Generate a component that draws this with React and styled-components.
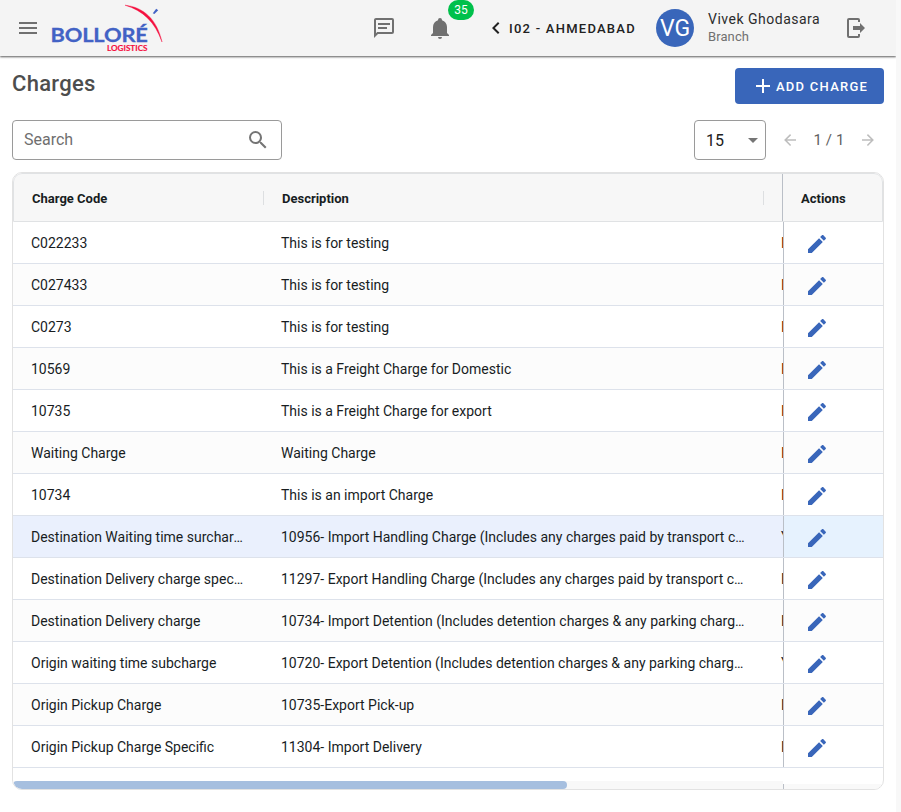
import React from "react";
import styled, { createGlobalStyle } from "styled-components";

const GlobalStyle = createGlobalStyle`
  * { box-sizing: border-box; }
  body {
    margin: 0;
    background: #f8f8f8;
    font-family: Roboto, "Liberation Sans", sans-serif;
    color: #212121;
  }
`;

const paths = {
  menu: "M3,6H21V8H3V6M3,11H21V13H3V11M3,16H21V18H3V16Z",
  message:
    "M20 2A2 2 0 0 1 22 4V16A2 2 0 0 1 20 18H6L2 22V4C2 2.9 2.9 2 4 2H20M4 4V17.17L5.17 16H20V4H4M6 7H18V9H6V7M6 11H15V13H6V11Z",
  bell: "M21,19V20H3V19L5,17V11C5,7.9 7.03,5.17 10,4.29C10,4.19 10,4.1 10,4A2,2 0 0,1 12,2A2,2 0 0,1 14,4C14,4.1 14,4.19 14,4.29C16.97,5.17 19,7.9 19,11V17L21,19M14,21A2,2 0 0,1 12,23A2,2 0 0,1 10,21",
  chevron: "M15.41,16.58L10.83,12L15.41,7.41L14,6L8,12L14,18L15.41,16.58Z",
  logout:
    "M16,17V14H9V10H16V7L21,12L16,17M14,2A2,2 0 0,1 16,4V6H14V4H5V20H14V18H16V20A2,2 0 0,1 14,22H5A2,2 0 0,1 3,20V4A2,2 0 0,1 5,2H14Z",
  plus: "M19,13H13V19H11V13H5V11H11V5H13V11H19V13Z",
  search:
    "M9.5,3A6.5,6.5 0 0,1 16,9.5C16,11.11 15.41,12.59 14.44,13.73L14.71,14H15.5L20.5,19L19,20.5L14,15.5V14.71L13.73,14.44C12.59,15.41 11.11,16 9.5,16A6.5,6.5 0 0,1 3,9.5A6.5,6.5 0 0,1 9.5,3M9.5,5C7,5 5,7 5,9.5C5,12 7,14 9.5,14C12,14 14,12 14,9.5C14,7 12,5 9.5,5Z",
  caret: "M7,10L12,15L17,10H7Z",
  left: "M20,11V13H8L13.5,18.5L12.08,19.92L4.16,12L12.08,4.08L13.5,5.5L8,11H20Z",
  right: "M4,11V13H16L10.5,18.5L11.92,19.92L19.84,12L11.92,4.08L10.5,5.5L16,11H4Z",
  pencil:
    "M20.71,7.04C21.1,6.65 21.1,6 20.71,5.63L18.37,3.29C18,2.9 17.35,2.9 16.96,3.29L15.12,5.12L18.87,8.87M3,17.25V21H6.75L17.81,9.93L14.06,6.18L3,17.25Z",
};

const Svg = styled.svg`
  display: block;
  flex: none;
  width: ${(p) => p.$size}px;
  height: ${(p) => p.$size}px;
  fill: currentColor;
`;

const Icon = ({ name, size = 24 }) => (
  <Svg $size={size} viewBox="0 0 24 24" aria-hidden="true">
    <path d={paths[name]} />
  </Svg>
);

const Page = styled.div`
  width: 896px;
  height: 812px;
  background: #fff;
  overflow: hidden;
`;

const AppBar = styled.header`
  display: flex;
  align-items: center;
  height: 56px;
  padding: 0 28px 0 16px;
  background: #f4f4f4;
  color: #707070;
  box-shadow: 0 1px 2px rgba(0, 0, 0, 0.65);
`;

const IconButton = styled.button`
  display: flex;
  position: relative;
  padding: 0;
  border: 0;
  background: none;
  color: inherit;
`;

const LogoSvg = styled.svg`
  display: block;
  width: 114px;
  height: 52px;
  margin-left: 10px;
`;

const Logo = () => (
  <LogoSvg viewBox="50 2 114 52" role="img" aria-label="Bolloré Logistics">
    <text transform="translate(50.6 42) scale(1.12 1)" fill="#4262c5" stroke="#4262c5" strokeWidth="0.3" fontFamily="Lato, sans-serif" fontWeight="700" fontSize="19.5" textLength="86.800" lengthAdjust="spacing">BOLLORÉ</text>
    <text x="107" y="50.6" fill="#f5103f" stroke="#f5103f" strokeWidth="0.15" fontFamily="Lato, sans-serif" fontWeight="700" fontSize="7.6" textLength="40.5" lengthAdjust="spacingAndGlyphs">LOGISTICS</text>
    <path d="M125 5.2C143 7 157 19 162 42C155 22 143 10.500 125 5.200Z" fill="#f5103f" stroke="#f5103f" strokeWidth="0.4" />
    <path d="M152.800 13.200L156.200 8.800L158.200 10.200L154.400 14Z" fill="#4262c5" />
  </LogoSvg>
);

const Tools = styled.div`
  display: flex;
  gap: 32px;
  margin-left: 208px;
`;

const Badge = styled.span`
  position: absolute;
  left: 20px;
  top: -16px;
  width: 26px;
  height: 20px;
  border-radius: 10px;
  background: #00c04b;
  color: #fff;
  font: 12px/20px Roboto, sans-serif;
  text-align: center;
`;

const Branch = styled.button`
  display: flex;
  align-items: center;
  gap: 1px;
  width: 152px;
  margin-left: 32px;
  padding: 0;
  border: 0;
  background: none;
  color: #212121;
  font: 500 13px/24px Roboto, sans-serif;
  letter-spacing: 1.25px;
  white-space: nowrap;
`;

const ButtonLabel = styled.span`
  padding-top: 2px;
`;

const Avatar = styled.div`
  width: 38px;
  height: 38px;
  margin-left: 20px;
  border-radius: 50%;
  background: #3966ba;
  color: #fff;
  font-size: 23px;
  line-height: 39px;
  text-align: center;
`;

const User = styled.div`
  display: flex;
  flex-direction: column;
  width: 136px;
  margin-left: 14px;
`;

const UserName = styled.span`
  color: #2c2c2c;
  font-size: 14px;
  line-height: 18px;
  letter-spacing: 0.5px;
`;

const UserRole = styled.span`
  color: #707070;
  font-size: 13px;
  line-height: 18px;
  letter-spacing: 0.1px;
`;

const Main = styled.main`
  padding: 12px 12px 0;
`;

const TitleRow = styled.div`
  display: flex;
  justify-content: space-between;
  height: 52px;
`;

const Title = styled.h1`
  margin: 0;
  color: #4d4d4d;
  font-size: 22px;
  font-weight: 500;
  line-height: 32px;
  letter-spacing: 0.28px;
`;

const AddButton = styled.button`
  display: flex;
  align-items: center;
  gap: 1px;
  width: 149px;
  height: 36px;
  padding: 0 0 0 16px;
  border: 0;
  border-radius: 4px;
  background: #3966ba;
  color: #fff;
  font: 500 13px/24px Roboto, sans-serif;
  letter-spacing: 1.25px;
  white-space: nowrap;
`;

const Controls = styled.div`
  display: flex;
  align-items: center;
  height: 40px;
`;

const Field = styled.div`
  display: flex;
  align-items: center;
  justify-content: space-between;
  width: ${(p) => p.$width}px;
  height: 40px;
  padding: 0 ${(p) => p.$right}px 0 11px;
  border: 1px solid #9a9a9a;
  border-radius: 4px;
  color: ${(p) => p.$color};
  font-size: 16px;
`;

const FieldText = styled.span`
  padding-bottom: ${(p) => (p.$raised ? 2 : 0)}px;
`;

const FieldIcon = styled.span`
  color: #757575;
`;

const Pager = styled.div`
  display: flex;
  align-items: center;
  justify-content: space-between;
  width: 96px;
  margin-left: 15px;
  margin-right: 7px;
  color: #bdbdbd;
`;

const Pages = styled.span`
  color: #616161;
  font-size: 15px;
  letter-spacing: 0.1px;
`;

const Spacer = styled.div`
  flex: 1;
`;

const Grid = styled.section`
  width: 872px;
  height: 618px;
  margin-top: 12px;
  border: 1px solid #e2e2e2;
  border-radius: 10px;
  overflow: hidden;
`;

const HeaderRow = styled.div`
  display: grid;
  grid-template-columns: 250px 500px 18px 100px;
  height: 49px;
  align-items: center;
  border: 1px solid #e0e2e4;
  border-radius: 9px 9px 0 0;
  background: #f7f7f7;
  color: #181d1f;
  font-size: 13px;
  font-weight: 700;
`;

const HeaderCell = styled.div`
  height: 14px;
  line-height: 15px;
  padding-left: 18px;
  border-right: 1px solid #dddfe1;
`;

const PinnedHeaderCell = styled.div`
  height: 47px;
  line-height: 49px;
  padding-left: 18px;
  border-left: 1px solid #babfc7;
`;

const Row = styled.div`
  display: grid;
  grid-template-columns: 250px 500px 20px 100px;
  height: 42px;
  border-bottom: 1px solid #dde2eb;
  background: ${(p) => (p.$hover ? "#eaf0fd" : p.$odd ? "#fcfcfc" : "#fff")};
  color: #181d1f;
  font-size: 14px;
  line-height: 42px;
`;

const Cell = styled.div`
  padding: 0 18px;
  overflow: hidden;
  text-overflow: ellipsis;
  white-space: nowrap;
`;

const ClippedCell = styled.div`
  padding-left: 18px;
  overflow: hidden;
  white-space: nowrap;
  color: ${(p) => (p.$warm ? "#7c2a08" : "#181d1f")};
`;

const ActionCell = styled.div`
  display: flex;
  align-items: center;
  padding: 2px 0 0 21px;
  border-left: 1px solid #babfc7;
  background: ${(p) => (p.$hover ? "#e6f2fe" : "transparent")};
  color: #3966ba;
`;

const ScrollArea = styled.div`
  display: flex;
  align-items: flex-end;
  height: 21px;
`;

const Track = styled.div`
  width: 770px;
  height: 8px;
  background: #f8f8f8;
`;

const Thumb = styled.div`
  width: 554px;
  height: 8px;
  border-radius: 4px;
  background: #a6bfdf;
`;

const PinnedTrack = styled.div`
  flex: 1;
  height: 5px;
  border-left: 1px solid #babfc7;
  background: #f9f9f9;
`;

const rows = [
  ["C022233", "This is for testing", "No"],
  ["C027433", "This is for testing", "No"],
  ["C0273", "This is for testing", "No"],
  ["10569", "This is a Freight Charge for Domestic", "No"],
  ["10735", "This is a Freight Charge for export", "No"],
  ["Waiting Charge", "Waiting Charge", "No"],
  ["10734", "This is an import Charge", "No"],
  ["Destination Waiting time surcharge", "10956- Import Handling Charge (Includes any charges paid by transport company)", "Yes"],
  ["Destination Delivery charge specific", "11297- Export Handling Charge (Includes any charges paid by transport company)", "No"],
  ["Destination Delivery charge", "10734- Import Detention (Includes detention charges & any parking charges)", "No"],
  ["Origin waiting time subcharge", "10720- Export Detention (Includes detention charges & any parking charges)", "Yes"],
  ["Origin Pickup Charge", "10735-Export Pick-up", "No"],
  ["Origin Pickup Charge Specific", "11304- Import Delivery", "No"],
];
const HOVERED = 7;

export default function App() {
  return (
    <Page>
      <GlobalStyle />
      <AppBar>
        <IconButton aria-label="Menu"><Icon name="menu" /></IconButton>
        <Logo />
        <Tools>
          <IconButton aria-label="Messages"><Icon name="message" /></IconButton>
          <IconButton aria-label="Notifications">
            <Icon name="bell" />
            <Badge>35</Badge>
          </IconButton>
        </Tools>
        <Branch>
          <Icon name="chevron" />
          <ButtonLabel>I02 - AHMEDABAD</ButtonLabel>
        </Branch>
        <Avatar>VG</Avatar>
        <User>
          <UserName>Vivek Ghodasara</UserName>
          <UserRole>Branch</UserRole>
        </User>
        <IconButton aria-label="Log out"><Icon name="logout" /></IconButton>
      </AppBar>
      <Main>
        <TitleRow>
          <Title>Charges</Title>
          <AddButton>
            <Icon name="plus" />
            <ButtonLabel>ADD CHARGE</ButtonLabel>
          </AddButton>
        </TitleRow>
        <Controls>
          <Field $width={270} $right={11} $color="#6f6f6f">
            <FieldText $raised>Search</FieldText>
            <FieldIcon><Icon name="search" /></FieldIcon>
          </Field>
          <Spacer />
          <Field $width={72} $right={0} $color="#212121">
            <FieldText>15</FieldText>
            <FieldIcon><Icon name="caret" /></FieldIcon>
          </Field>
          <Pager>
            <Icon name="left" size={18} />
            <Pages>1 / 1</Pages>
            <Icon name="right" size={18} />
          </Pager>
        </Controls>
        <Grid>
          <HeaderRow>
            <HeaderCell>Charge Code</HeaderCell>
            <HeaderCell>Description</HeaderCell>
            <span />
            <PinnedHeaderCell>Actions</PinnedHeaderCell>
          </HeaderRow>
          {rows.map(([code, description, flag], i) => (
            <Row key={i} $odd={i % 2 === 1} $hover={i === HOVERED}>
              <Cell>{code}</Cell>
              <Cell>{description}</Cell>
              <ClippedCell $warm={i < HOVERED}>{flag}</ClippedCell>
              <ActionCell $hover={i === HOVERED}><Icon name="pencil" /></ActionCell>
            </Row>
          ))}
          <ScrollArea>
            <Track><Thumb /></Track>
            <PinnedTrack />
          </ScrollArea>
        </Grid>
      </Main>
    </Page>
  );
}
